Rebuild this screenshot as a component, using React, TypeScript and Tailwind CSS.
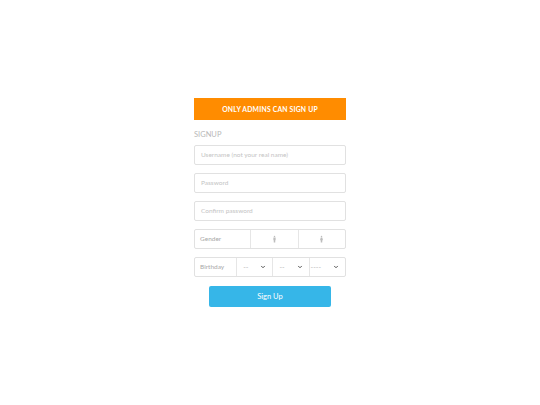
import { ChevronDown } from "lucide-react";

function Person({ female }: { female?: boolean }) {
  return (
    <svg width="3" height="8" viewBox="0 0 4 9" className="text-[#bdbdbd]">
      <circle cx="2" cy="1" r="1" fill="currentColor" />
      {female ? (
        <path d="M1 2.5h2l1 3.5H3v3H1V6H0z" fill="currentColor" />
      ) : (
        <path d="M0.5 2.5h3v3.5H3v3H1V6H0.5z" fill="currentColor" />
      )}
    </svg>
  );
}

function Select({ dash }: { dash: string }) {
  return (
    <div className="flex flex-1 items-center justify-end gap-[12px] border-l border-[#e6e6e6] pr-[6px]">
      <span className="text-[7px] text-[#bdbdbd]">{dash}</span>
      <ChevronDown size={6} strokeWidth={4} className="text-[#555]" />
    </div>
  );
}

export default function App() {
  return (
    <div
      className="flex h-[405px] w-[540px] flex-col items-center bg-white pt-[98px]"
      style={{ fontFamily: 'Lato, "Noto Sans", sans-serif' }}
    >
      <div className="w-[152px]">
        <div className="flex h-[22px] items-center justify-center bg-[#ff8c00] text-[6.8px] font-bold tracking-[0.2px] text-white">
          ONLY ADMINS CAN SIGN UP
        </div>
        <div className="mt-[10px] text-[7.5px] leading-[10px] text-[#b8b8b8]">SIGNUP</div>
        <div className="mt-[5px] flex flex-col gap-[8px]">
          {["Username (not your real name)", "Password", "Confirm password"].map((p) => (
            <div
              key={p}
              className="flex h-[20px] items-center rounded-[2px] border border-[#e1e1e1] px-[6px] text-[6.5px] text-[#c4c4c4]"
            >
              {p}
            </div>
          ))}
          <div className="flex h-[20px] rounded-[2px] border border-[#e1e1e1] text-[6.5px]">
            <div className="flex w-[55px] items-center px-[5px] text-[#a8a8a8]">Gender</div>
            <div className="flex flex-1 items-center justify-center border-l border-[#e6e6e6]">
              <Person />
            </div>
            <div className="flex flex-1 items-center justify-center border-l border-[#e6e6e6]">
              <Person female />
            </div>
          </div>
          <div className="flex h-[20px] rounded-[2px] border border-[#e1e1e1] text-[6.5px]">
            <div className="flex w-[41px] items-center px-[5px] text-[#a8a8a8]">Birthday</div>
            <Select dash="--" />
            <Select dash="--" />
            <Select dash="----" />
          </div>
        </div>
        <div className="mt-[9px] flex justify-center">
          <button className="flex h-[21px] w-[122px] items-center justify-center rounded-[2px] bg-[#36b6e8] text-[7.5px] text-white">
            Sign Up
          </button>
        </div>
      </div>
    </div>
  );
}
